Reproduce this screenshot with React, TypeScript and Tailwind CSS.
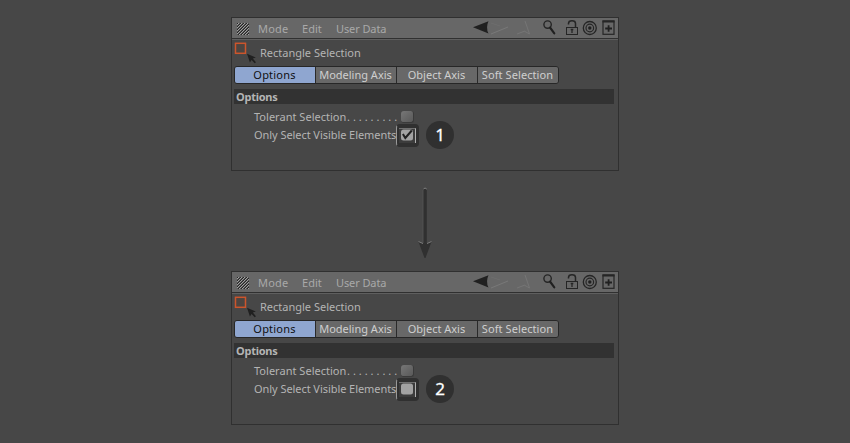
import React from "react";

const tabs = [
  { label: "Options", spacing: "tracking-[0.2px]" },
  { label: "Modeling Axis", spacing: "tracking-[0px]" },
  { label: "Object Axis", spacing: "tracking-[0px]" },
  { label: "Soft Selection", spacing: "tracking-[0.08px]" },
];

function GripIcon() {
  const cells = Array.from({ length: 12 }, (_, i) => i);
  return (
    <svg className="block h-3 w-3 shrink-0" viewBox="0 0 12 12">
      {cells.map((y) =>
        cells.map((x) => {
          const phase = (x + y) % 3;
          const fill = phase === 0 ? "#262626" : phase === 1 ? "#a0a0a0" : "#555555";
          return <rect key={`${x}-${y}`} x={x} y={y} width="1" height="1" fill={fill} />;
        }),
      )}
    </svg>
  );
}

function ToolbarIcons() {
  return (
    <svg className="block h-5 w-[145px]" viewBox="472 18 145 20" fill="none">
      <path d="M473 27.3L488.5 21.2Q485.5 27.5 488.5 33.5Z" fill="#202020" />
      <path d="M491 34L508 27" stroke="#7c7c7c" strokeWidth="0.8" />
      <path d="M491 23L500 26" stroke="#717171" strokeWidth="0.6" />
      <path d="M517 34L525 31M525 21L529.5 34L525 31.5" stroke="#797979" strokeWidth="0.8" />
      <circle cx="547.6" cy="24.6" r="3.7" stroke="#252525" strokeWidth="1.4" />
      <path d="M550 27.5L554.3 33.3" stroke="#202020" strokeWidth="2.1" strokeLinecap="round" />
      <path d="M568.5 24.5V23.5Q568.5 20.8 572 20.8Q575.5 20.8 575.5 23.5V27" stroke="#252525" strokeWidth="1.5" />
      <rect x="566.5" y="27.5" width="11" height="7" stroke="#252525" strokeWidth="1" />
      <path d="M570.7 29.5H573.3M572 29V33" stroke="#252525" strokeWidth="1.3" />
      <circle cx="589.8" cy="28" r="6.5" stroke="#252525" strokeWidth="1.3" />
      <circle cx="589.8" cy="28" r="3.8" stroke="#252525" strokeWidth="1.2" />
      <circle cx="589.8" cy="28" r="1.7" fill="#202020" />
      <rect x="603" y="21" width="11" height="13.3" stroke="#252525" strokeWidth="1.2" />
      <path d="M602.5 21.5H614.5" stroke="#252525" strokeWidth="2" />
      <path d="M605.2 28.5H612M608.6 25.2V31.8" stroke="#202020" strokeWidth="1.8" />
    </svg>
  );
}

function SelectionIcon() {
  return (
    <svg className="block h-[23px] w-[24px] shrink-0" viewBox="234 42 24 23">
      <rect x="235.5" y="43.3" width="10" height="10" fill="#4c4541" stroke="#cc552c" strokeWidth="1.5" />
      <path d="M247 53.7L255.8 57.5L252.8 58.6L256 62.2L254.7 63.3L251.6 59.9L249.9 62.5Z" fill="#202020" />
    </svg>
  );
}

function Panel({ step, checked }: { step: number; checked: boolean }) {
  return (
    <section className="h-[154px] w-[388px] border border-[#303030] bg-[#474747] text-[11px] leading-[14px] text-[#b4b4b4]">
      <header className="flex h-5 items-center justify-between bg-[#676767] pr-px pl-[5px] text-[#a9a9a9]">
        <div className="flex items-center pt-[2px]">
          <GripIcon />
          <span className="ml-[9px] w-11 tracking-[0.2px]">Mode</span>
          <span className="w-[34px] tracking-[0.05px]">Edit</span>
          <span className="tracking-[-0.1px]">User Data</span>
        </div>
        <ToolbarIcons />
      </header>
      <div className="h-[2px] border-t border-b border-t-[#303030] border-b-[#5f5f5f]" />
      <div className="flex h-[26px] items-start pt-[2px] pl-[2px]">
        <SelectionIcon />
        <span className="mt-[4px] ml-[2px]">Rectangle Selection</span>
      </div>
      <nav className="ml-[2px] flex h-[18px] w-[325px] overflow-hidden rounded-[3px] border border-[#272727]">
        {tabs.map((tab, i) => (
          <div
            key={tab.label}
            className={`flex shrink-0 items-center justify-center whitespace-nowrap ${tab.spacing} ${
              i === 0 ? "w-20 bg-[#8fa6d0] pr-px text-[#101010]" : "w-[81px] border-l border-[#2a2a2a] bg-[#686868] pr-px text-[#cfcfcf]"
            }`}
          >
            {tab.label}
          </div>
        ))}
      </nav>
      <h2 className="mt-[5px] ml-[2px] flex h-[15px] w-[380px] items-center bg-[#323232] pl-[2px] font-bold tracking-[-0.25px] text-[#b5b5b5]">Options</h2>
      <div className="mt-1 ml-[22px] flex h-[18px] items-center">
        <span className="w-[93px] whitespace-nowrap tracking-[0.02px]">Tolerant Selection</span>
        <span className="w-[54px] whitespace-nowrap tracking-[2.95px]">.........</span>
        <span className="h-[12px] w-[13px] rounded-[3px] border-r border-b border-[#3a3a3a] bg-linear-to-br from-[#777] to-[#595959]" />
      </div>
      <div className="ml-[22px] flex h-[18px] items-center">
        <span className="w-[142px] whitespace-nowrap tracking-[-0.06px]">Only Select Visible Elements</span>
        <span className="flex h-[23px] w-[23px] shrink-0 items-center justify-center rounded-[4px] border-2 border-l border-[#303030] border-l-[#999] bg-[#303030]">
          <span className="flex h-[15px] w-[17px] items-center justify-center border-t border-r border-t-[#707070] border-r-[#b0b0b0] bg-[#3c3c3c] pl-px">
            <svg className="mb-px block h-3 w-3" viewBox="0 0 12 12" fill="none">
              <rect x="0" y="0.5" width="12" height="11" rx="2.5" fill="#a2a2a2" />
              {checked && <path d="M1.9 5L4.3 9L10.8 1.5" stroke="#202020" strokeWidth="2" />}
            </svg>
          </span>
        </span>
        <span className="ml-[7px] flex h-7 w-7 shrink-0 items-center justify-center rounded-full bg-[#303030] pb-[2px] text-[17px] leading-none text-white [-webkit-text-stroke:0.3px_white]">
          {step}
        </span>
      </div>
    </section>
  );
}

export default function App() {
  return (
    <main className="flex h-[443px] w-[850px] flex-col items-center overflow-hidden bg-[#474747] pt-[17px] font-['Noto_Sans',sans-serif]">
      <Panel step={1} checked />
      <div className="flex h-[100px] items-start justify-center pt-[16px]">
        <svg className="block h-[74px] w-4" viewBox="0 0 16 74">
          <path d="M6.2 3Q8 -1 9.8 3V56L14.8 54L8.5 71H7.5L1.2 54L6.2 56Z" fill="#303030" />
          <path d="M6.5 2Q8 0 9.7 2M1.5 54.5L6 56.5M10 56.5L14.5 54.5" stroke="#808080" strokeWidth="1" fill="none" />
          <path d="M6 3V56" stroke="#5a5a5a" strokeWidth="0.6" />
        </svg>
      </div>
      <Panel step={2} checked={false} />
    </main>
  );
}
